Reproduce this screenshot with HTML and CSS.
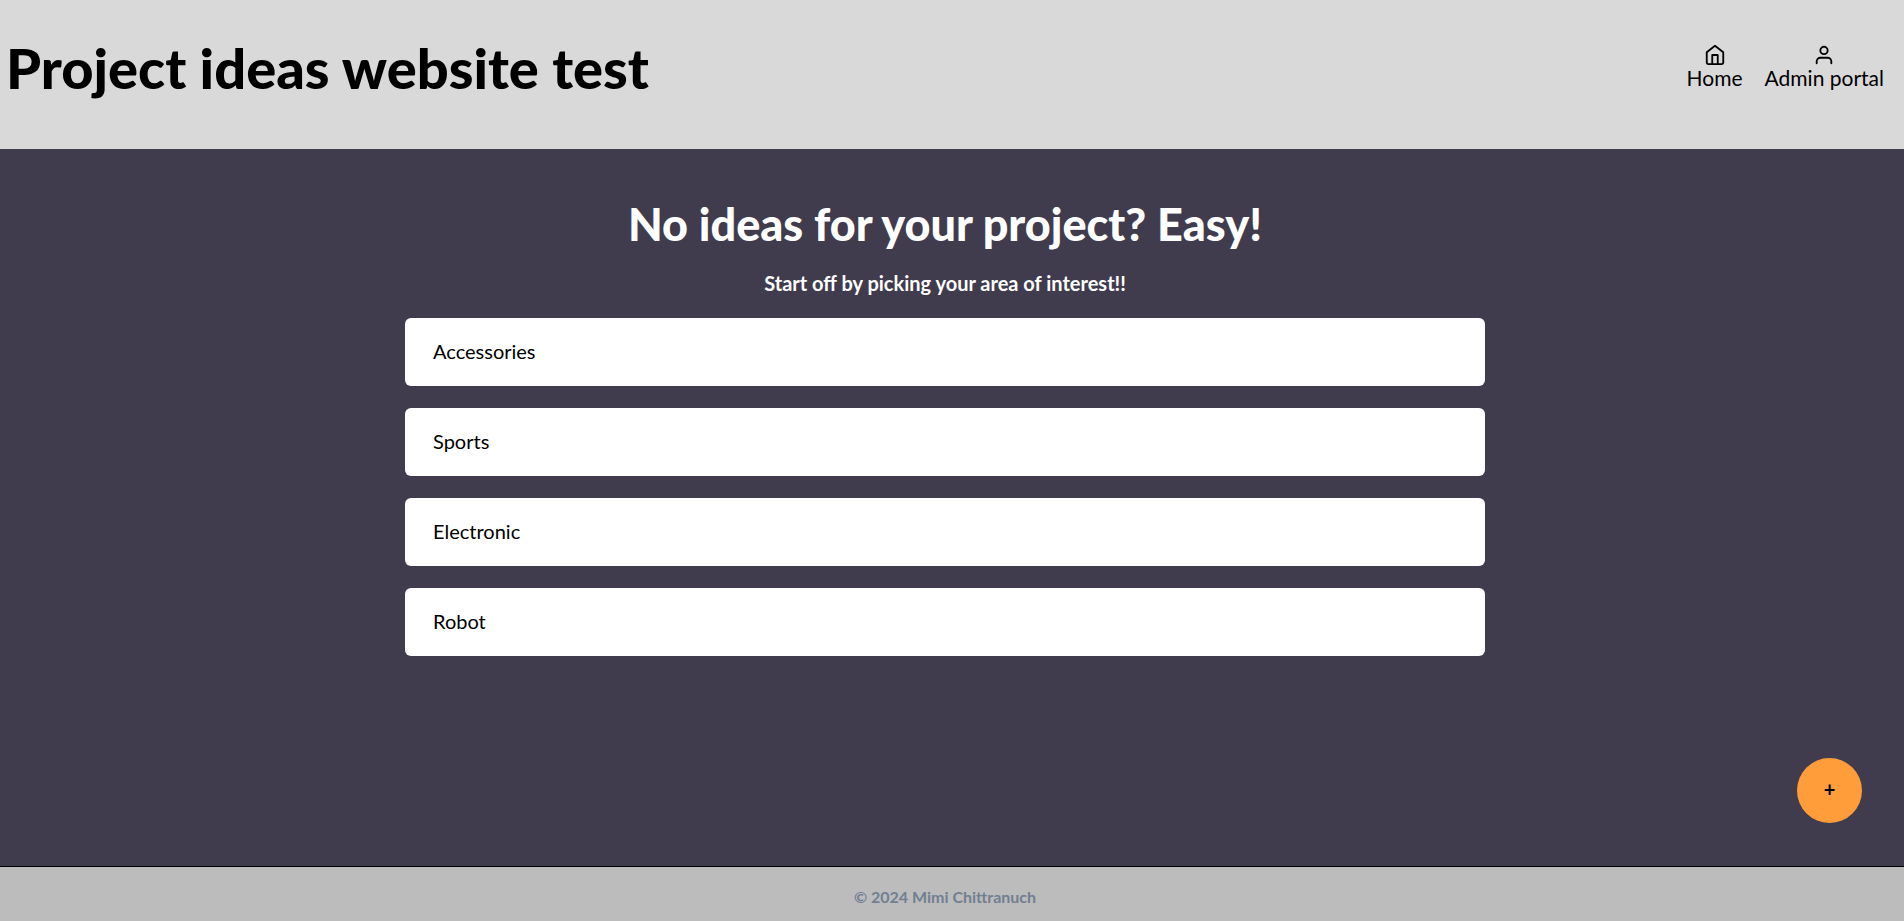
FILE: index.html
```html
<!DOCTYPE html>
<html lang="en">
<head>
<meta charset="utf-8">
<title>Project ideas website test</title>
<link rel="stylesheet" href="styles.css">
</head>
<body>
<header class="site-header">
  <h1 class="site-title">Project ideas website test</h1>
  <nav class="site-nav">
    <a class="nav-link" href="#home">
      <svg class="nav-icon" viewBox="0 0 24 24" aria-hidden="true"><path d="M3 9l9-7 9 7v11a2 2 0 0 1-2 2H5a2 2 0 0 1-2-2z"/><path d="M9 22V12h6v10"/></svg>
      Home
    </a>
    <a class="nav-link" href="#admin">
      <svg class="nav-icon" viewBox="0 0 24 24" aria-hidden="true"><path d="M20 21v-2a4 4 0 0 0-4-4H8a4 4 0 0 0-4 4v2"/><circle cx="12" cy="7" r="4"/></svg>
      Admin portal
    </a>
  </nav>
</header>
<main class="content">
  <h2 class="headline">No ideas for your project? Easy!</h2>
  <p class="intro">Start off by picking your area of interest!!</p>
  <div class="categories">
    <button class="category" type="button">Accessories</button>
    <button class="category" type="button">Sports</button>
    <button class="category" type="button">Electronic</button>
    <button class="category" type="button">Robot</button>
  </div>
  <button class="add-button" type="button" aria-label="Add idea">+</button>
</main>
<footer class="site-footer">© 2024 Mimi Chittranuch</footer>
</body>
</html>
```
FILE: styles.css
```css
* { box-sizing: border-box; }

body {
  margin: 0;
  min-height: 100vh;
  display: flex;
  flex-direction: column;
  background: #403b4d;
  color: #000;
  font-family: "Gill Sans", "Gill Sans MT", Lato, sans-serif;
  font-size: 20px;
  line-height: 26px;
}

.site-header {
  display: flex;
  justify-content: space-between;
  align-items: flex-start;
  padding: 34px 20px 47px 6px;
  background: #d9d9d9;
}

.site-title {
  margin: 0;
  font-size: 56px;
  line-height: 68px;
  font-weight: 900;
}

.site-nav {
  display: flex;
  gap: 22px;
  padding-top: 10px;
  font-size: 21px;
  line-height: 24px;
}

.nav-link {
  display: flex;
  flex-direction: column;
  align-items: center;
  color: inherit;
  text-decoration: none;
}

.nav-icon {
  width: 22px;
  height: 22px;
  fill: none;
  stroke: currentColor;
  stroke-width: 2;
  stroke-linecap: round;
  stroke-linejoin: round;
}

.content {
  flex: 1;
  display: flex;
  flex-direction: column;
  align-items: center;
  padding: 47px 14px 40px 0;
}

.headline {
  margin: 0;
  color: #fff;
  font-size: 45px;
  line-height: 56px;
  font-weight: 900;
}

.intro {
  margin: 18px 0 22px;
  color: #fff;
  font-weight: 700;
}

.categories {
  display: flex;
  flex-direction: column;
  gap: 22px;
  width: 100%;
  max-width: 1080px;
}

.category {
  height: 68px;
  padding: 0 28px 2px;
  border: 0;
  border-radius: 6px;
  background: #fff;
  color: #000;
  font: inherit;
  text-align: left;
}

.add-button {
  position: fixed;
  right: 42px;
  bottom: 98px;
  width: 65px;
  height: 65px;
  padding: 0 0 4px;
  border: 0;
  border-radius: 50%;
  background: #ff9d3b;
  color: #000;
  font: inherit;
  font-weight: 700;
}

.site-footer {
  padding: 17px 14px 11px 0;
  border-top: 1px solid #000;
  background: #bcbcbc;
  color: #708090;
  font-size: 16px;
  font-weight: 700;
  text-align: center;
}
```
